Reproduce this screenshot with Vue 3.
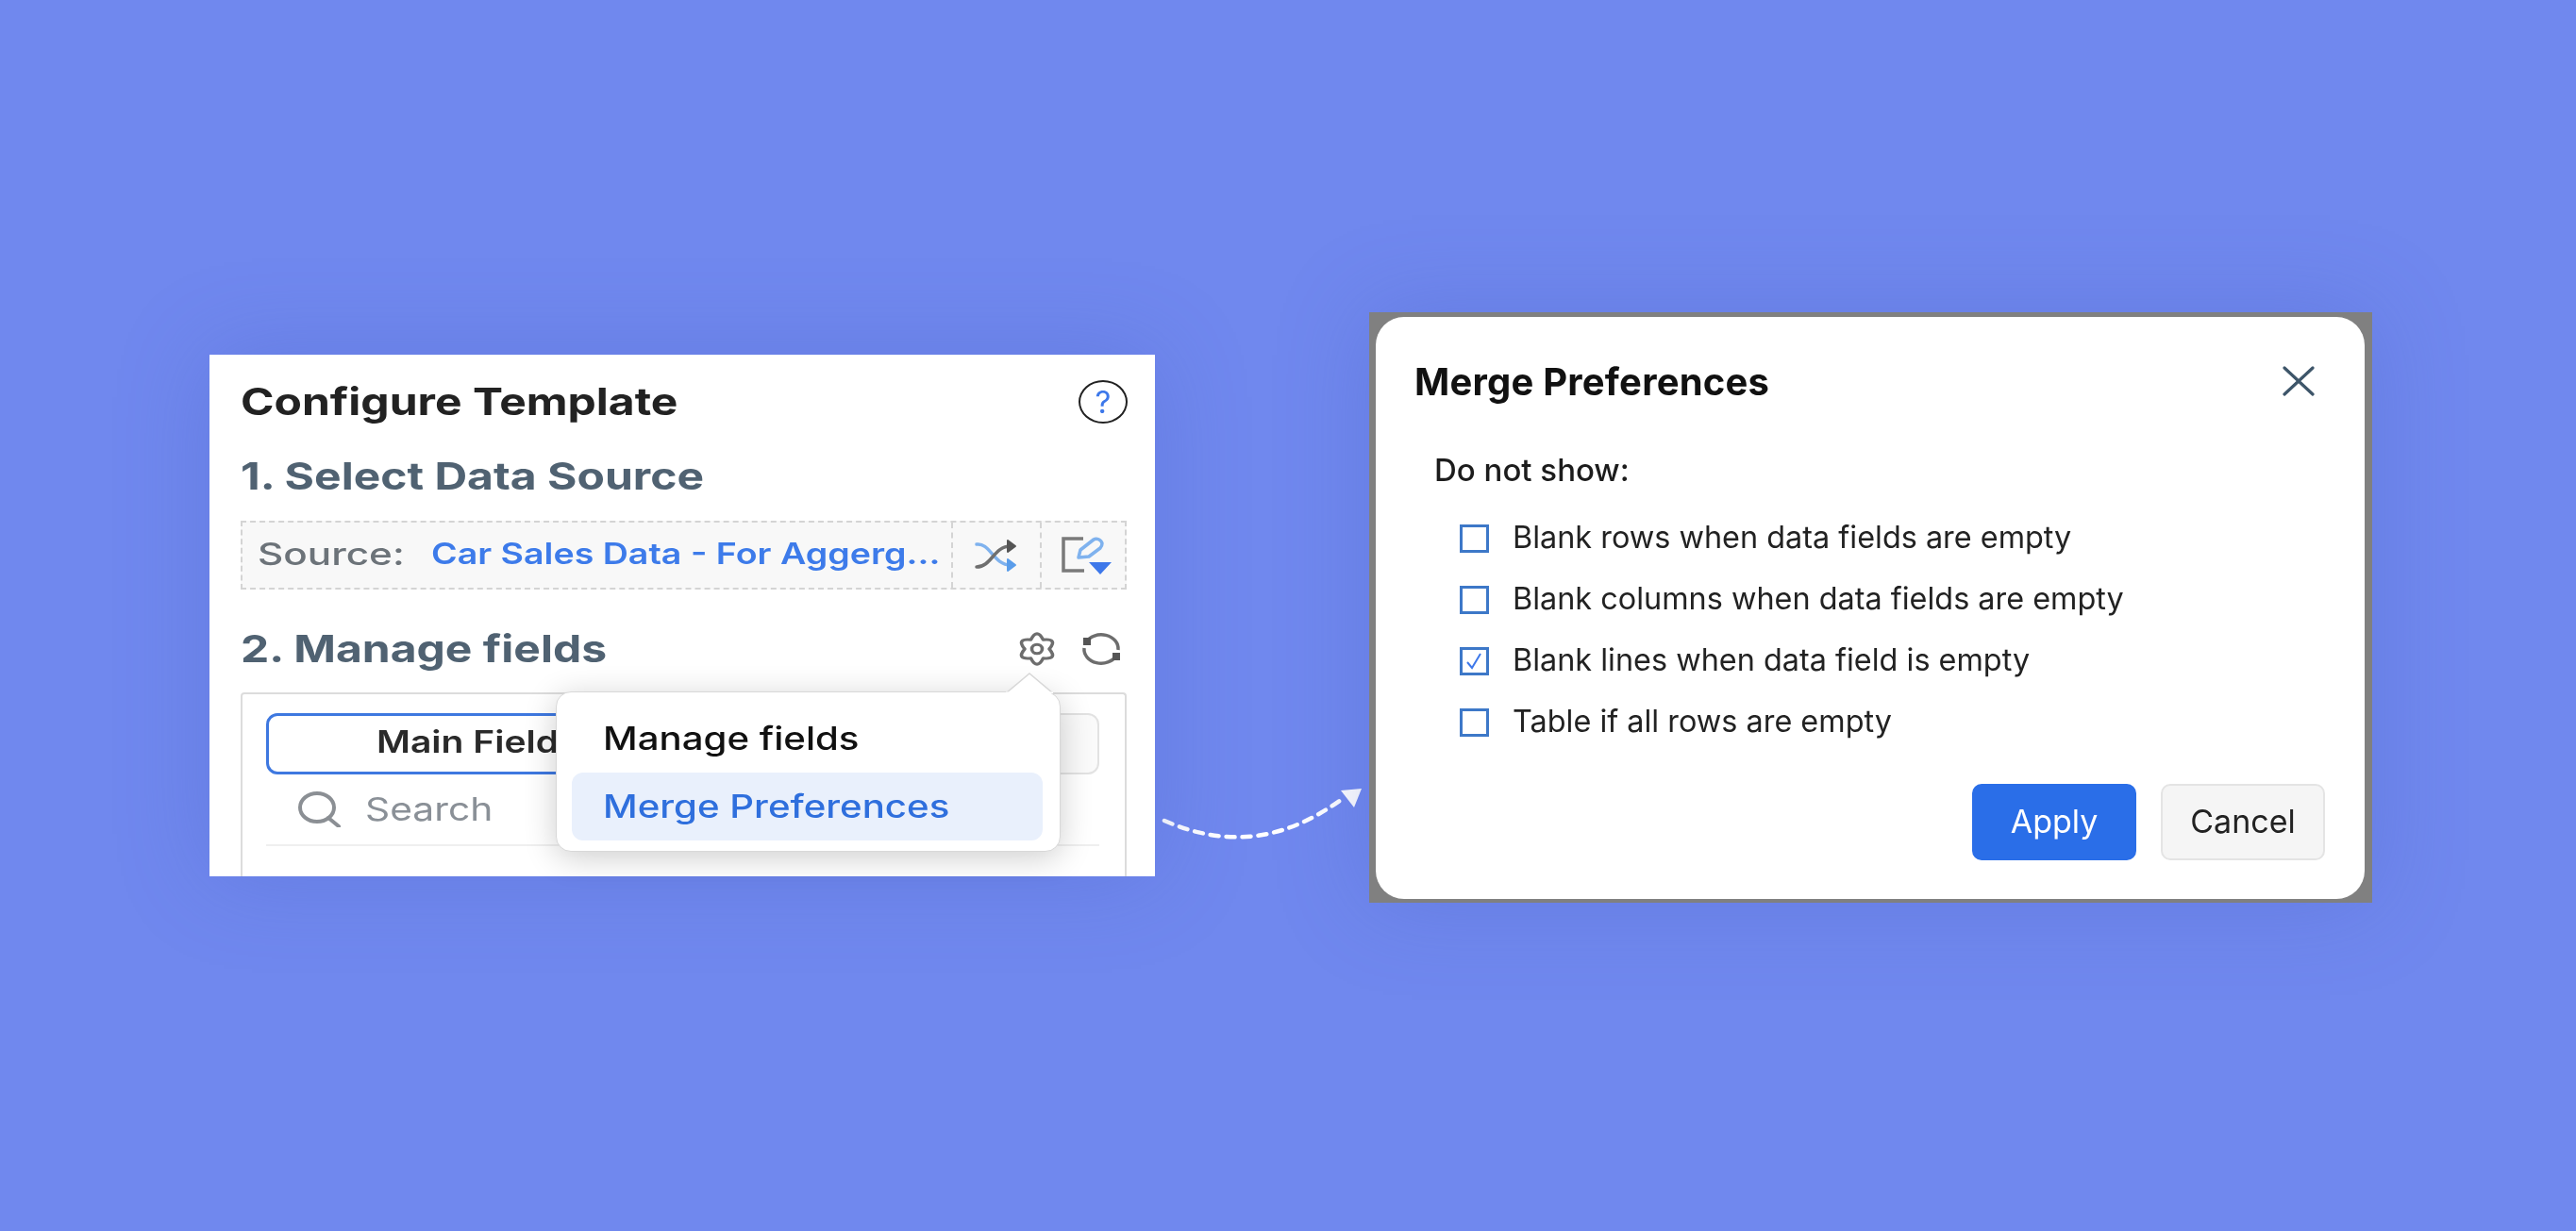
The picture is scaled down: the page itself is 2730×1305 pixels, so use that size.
<script setup>
const options = [
  { label: 'Blank rows when data fields are empty', checked: false },
  { label: 'Blank columns when data fields are empty', checked: false },
  { label: 'Blank lines when data field is empty', checked: true },
  { label: 'Table if all rows are empty', checked: false },
]
</script>

<template>
  <div class="stage">
    <section class="panel">
      <div class="title-row">
        <h1 class="title"><span class="wide">Configure Template</span></h1>
        <span class="help">?</span>
      </div>
      <h2 class="step step-one"><span class="wide">1. Select Data Source</span></h2>
      <div class="source">
        <div class="source-main">
          <span class="source-label wide">Source:</span>
          <span class="source-name wide">Car Sales Data - For Aggerg...</span>
        </div>
        <div class="source-btn">
          <svg width="46" height="36" viewBox="0 0 46 36" fill="none" stroke-width="3.5" stroke-linecap="round">
            <path d="M2 6C16 4 20 28 38 28" stroke="#7fb2ee" />
            <path d="M35 22l8 6-8 6z" fill="#5a9dea" stroke="#5a9dea" stroke-width="2" stroke-linejoin="round" />
            <path d="M2 30C18 30 20 8 38 8" stroke="#6f6f6f" />
            <path d="M35 2l8 6-8 6z" fill="#555" stroke="#555" stroke-width="2" stroke-linejoin="round" />
          </svg>
        </div>
        <div class="source-btn last">
          <svg width="56" height="42" viewBox="0 0 56 42" fill="none">
            <path d="M25 3H4v34h22" stroke="#7a7a7a" stroke-width="3.5" />
            <path d="M20 23l2-8L36 4c3-2 8 0 9 4 0 2 0 3-2 5L31 22z" stroke="#7fb2ee" stroke-width="3.5" stroke-linejoin="round" />
            <path d="M31 28h24L43 41z" fill="#3d78ea" />
          </svg>
        </div>
      </div>
      <div class="manage-row">
        <h2 class="step"><span class="wide">2. Manage fields</span></h2>
        <div class="tools">
          <svg class="gear" width="44" height="38" viewBox="-2 -2 44 44" preserveAspectRatio="none" fill="none" stroke="#6d6d6d" stroke-width="3.6" stroke-linejoin="round">
            <path d="M13.500 8.700Q20-6 26.500 8.700Q42.500 7 33 20Q42.500 33 26.500 31.300Q20 46 13.500 31.300Q-2.500 33 7 20Q-2.500 7 13.500 8.700Z" />
            <circle cx="20" cy="20" r="5.500" />
          </svg>
          <svg width="42" height="36" viewBox="0 0 42 36" fill="none" stroke="#6d6d6d" stroke-width="3.5">
            <path d="M5 11A18 15 0 0 1 39 19" />
            <path d="M37 25A18 15 0 0 1 3 17" />
            <rect x="2" y="6" width="8" height="8" fill="#555" stroke="none" />
            <rect x="33" y="22" width="8" height="8" fill="#555" stroke="none" />
          </svg>
        </div>
      </div>
      <div class="fields">
        <div class="tabs">
          <div class="tab active"><span class="wide">Main Fields</span></div>
          <div class="tab"></div>
        </div>
        <div class="search">
          <svg width="48" height="38" viewBox="0 0 48 38" fill="none" stroke="#8b8f94" stroke-width="4">
            <ellipse cx="21" cy="17" rx="18" ry="15" />
            <path d="M33 28l11 9" stroke-linecap="round" />
          </svg>
          <span class="search-text wide">Search</span>
        </div>
      </div>
      <div class="popover">
        <svg class="popover-tip" width="50" height="22" viewBox="0 0 50 22">
          <path d="M0 22L25 1l25 21z" fill="#fff" stroke="#d8d8d8" stroke-width="1.500" />
          <path d="M0 22h50" stroke="#fff" stroke-width="3" />
        </svg>
        <div class="menu-item"><span class="wide">Manage fields</span></div>
        <div class="menu-item selected"><span class="wide">Merge Preferences</span></div>
      </div>
    </section>

    <svg class="connector" width="227" height="626" viewBox="0 0 227 626" fill="none">
      <path d="M10 539C70 565 130 565 197 517" stroke="#fff" stroke-width="4.500" stroke-linecap="round" stroke-dasharray="9 8" />
      <path d="M197 507L219 505L211 525Z" fill="#fff" />
    </svg>

    <div class="frame">
      <section class="dialog">
        <header class="dialog-head">
          <h2 class="dialog-title">Merge Preferences</h2>
          <svg width="34" height="32" viewBox="0 0 34 32" fill="none" stroke="#3d5569" stroke-width="3.200" stroke-linecap="round">
            <path d="M2 2l30 28M32 2L2 30" />
          </svg>
        </header>
        <p class="lead">Do not show:</p>
        <ul class="options">
          <li v-for="option in options" :key="option.label" class="option">
            <span class="check">
              <svg v-if="option.checked" width="20" height="20" viewBox="0 0 20 20" fill="none" stroke="#3d78ea" stroke-width="2">
                <path d="M2 11l5 6L16 2" />
              </svg>
            </span>
            <span class="option-label">{{ option.label }}</span>
          </li>
        </ul>
        <footer class="actions">
          <button class="btn primary">Apply</button>
          <button class="btn">Cancel</button>
        </footer>
      </section>
    </div>
  </div>
</template>

<style>
html, body { margin: 0; background: #7088ee; }
</style>

<style scoped>
.stage {
  width: 2730px;
  height: 1305px;
  box-sizing: border-box;
  padding: 331px 0 0 222px;
  display: flex;
  align-items: flex-start;
  background: #7088ee;
  font-family: Inter, "Liberation Sans", sans-serif;
  overflow: hidden;
}
h1, h2, p, ul { margin: 0; padding: 0; }
.wide {
  display: inline-block;
  transform: scaleX(1.2);
  transform-origin: left center;
  white-space: nowrap;
}
.panel {
  position: relative;
  box-sizing: border-box;
  flex: none;
  width: 1002px;
  height: 553px;
  margin-top: 45px;
  padding: 20px 30px 0 33px;
  display: flex;
  flex-direction: column;
  background: #fff;
  box-shadow: 0 0 90px rgba(70, 90, 190, .28);
  filter: blur(.5px);
}
.title-row, .manage-row {
  display: flex;
  align-items: center;
  justify-content: space-between;
}
.title-row { height: 60px; }
.title { font-size: 40px; line-height: 60px; font-weight: 700; color: #222; }
.help {
  box-sizing: border-box;
  width: 52px;
  height: 46px;
  border: 2.500px solid #222;
  border-radius: 50%;
  margin-right: -1px;
  display: flex;
  align-items: center;
  justify-content: center;
  font-size: 33px;
  color: #3d78ea;
}
.step { font-size: 40px; line-height: 50px; font-weight: 700; color: #506272; }
.step-one { margin-top: 24px; }
.source {
  box-sizing: border-box;
  height: 73px;
  margin-top: 22px;
  display: flex;
  background: #f8f8f8;
  border: 2px dashed #d4d4d4;
}
.source-main {
  flex: 1;
  display: flex;
  align-items: center;
  padding: 0 0 3px 16px;
  font-size: 31.300px;
}
.source-label { width: 184px; font-size: 33px; transform: scaleX(1.28); color: #6c7379; font-weight: 500; }
.source-name { color: #3d7bea; font-weight: 600; }
.source-btn {
  flex: none;
  width: 94px;
  display: flex;
  align-items: center;
  justify-content: center;
  border-left: 2px dashed #d4d4d4;
  box-sizing: border-box;
}
.source-btn.last { width: 90px; padding-left: 6px; }
.manage-row { height: 50px; margin-top: 38px; }
.tools { display: flex; align-items: center; gap: 25px; padding-right: 6px; }
.fields {
  flex: 1;
  box-sizing: border-box;
  margin-top: 21px;
  padding: 20px 27px 0 25px;
  border: 2px solid #dcdcdc;
  border-bottom: 0;
  border-radius: 4px 4px 0 0;
}
.tabs { display: grid; grid-template-columns: 1fr 1fr; height: 65px; }
.tab {
  display: flex;
  align-items: center;
  justify-content: center;
  border: 2px solid #e2e2e2;
  border-left: 0;
  border-radius: 0 12px 12px 0;
  background: #fafafa;
}
.tab.active {
  justify-content: flex-start;
  padding: 0 0 5px 114px;
  background: #fff;
  border: 3px solid #3e78e0;
  border-radius: 12px;
  font-size: 32.500px;
  font-weight: 600;
  color: #2a2a2a;
}
.search {
  height: 74px;
  display: flex;
  align-items: center;
  gap: 24px;
  padding-left: 33px;
  border-bottom: 2px solid #efefef;
}
.search-text { padding-bottom: 2px; font-size: 34px; color: #8a9097; }
.popover {
  position: absolute;
  left: 367px;
  top: 357px;
  box-sizing: border-box;
  width: 535px;
  height: 170px;
  padding: 13px 18px 0 16px;
  background: #fff;
  border-radius: 16px;
  border: 1.500px solid #d8d8d8;
  box-shadow: 0 6px 34px rgba(0, 0, 0, .2);
}
.popover-tip { position: absolute; left: 476px; top: -21px; }
.menu-item {
  height: 72px;
  display: flex;
  align-items: center;
  padding-left: 33px;
  border-radius: 12px;
  font-size: 33.500px;
  font-weight: 500;
  color: #111;
}
.menu-item.selected { background: #e9f0fc; color: #2f6fdd; }
.connector { flex: none; }
.frame {
  flex: none;
  box-sizing: border-box;
  width: 1063px;
  height: 626px;
  padding: 5px 8px 4px 7px;
  background: #808080;
  box-shadow: 0 0 90px rgba(70, 90, 190, .28);
}
.dialog {
  box-sizing: border-box;
  height: 100%;
  padding: 38px 42px 0 41px;
  background: #fff;
  border-radius: 30px;
  display: flex;
  flex-direction: column;
  filter: blur(.4px);
}
.dialog-head {
  height: 60px;
  display: flex;
  align-items: center;
  justify-content: space-between;
  padding-right: 11px;
}
.dialog-title { font-size: 40px; font-weight: 700; color: #111; letter-spacing: .2px; }
.lead { height: 40px; line-height: 40px; margin: 44px 0 0 21px; font-size: 33px; font-weight: 500; color: #1c1c1c; }
.options { margin-top: 20px; padding-left: 48px; list-style: none; }
.option { height: 65px; display: flex; align-items: center; gap: 25px; }
.check {
  flex: none;
  box-sizing: border-box;
  width: 31px;
  height: 30px;
  display: flex;
  align-items: center;
  justify-content: center;
  border: 3px solid #3d78c8;
}
.option-label { padding-bottom: 3px; font-size: 32.400px; color: #222; white-space: nowrap; }
.actions { margin-top: 33px; display: flex; justify-content: flex-end; gap: 26px; }
.btn {
  box-sizing: border-box;
  width: 174px;
  height: 81px;
  padding: 0 0 3px;
  border: 2px solid #e4e4e4;
  border-radius: 10px;
  background: #f5f5f5;
  font: 400 34px Inter, "Liberation Sans", sans-serif;
  color: #222;
}
.btn.primary { background: #2a6ee8; border-color: #2a6ee8; color: #fff; }
</style>
